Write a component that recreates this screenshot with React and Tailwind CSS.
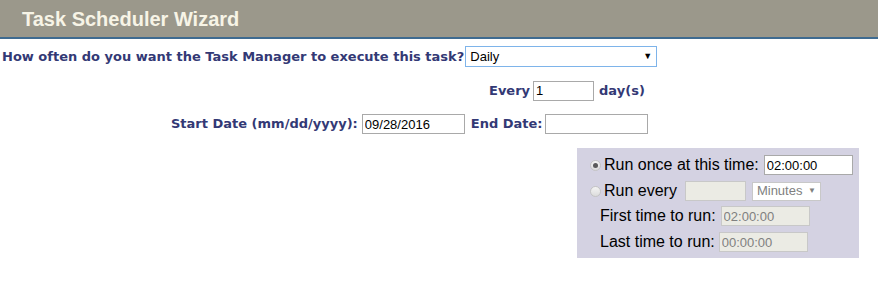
import { useState } from 'react'

const label = 'font-bold text-[#333975] text-[13px] font-["DejaVu_Sans",Verdana,sans-serif]'
const box = 'h-[20px] border border-[#a9a9a9] bg-white px-[2px] text-[13px] text-black font-["Liberation_Sans",Arial,sans-serif] outline-none'
const off = 'h-[20px] border border-[#c8c8c8] bg-[#ebebe4] px-[2px] text-[13px] text-[#808080] font-["Liberation_Sans",Arial,sans-serif] outline-none'

function Radio({ on }) {
  return (
    <span className="w-[11px] h-[11px] rounded-full border border-[#c4c4c4] bg-gradient-to-b from-[#f4f4f4] to-[#dcdcdc] flex items-center justify-center">
      {on && <span className="w-[5px] h-[5px] rounded-full bg-[#5a5a5a]" />}
    </span>
  )
}

export default function App() {
  const [freq, setFreq] = useState('Daily')

  return (
    <div className="w-[878px] h-[282px] bg-white overflow-hidden">
      <div className="h-[37px] bg-[#9b988b] flex items-center pl-[22px] border-b-2 border-[#3f6b90] box-content">
        <h1 className="text-[20px] font-bold text-[#f7f4e6] font-['Liberation_Sans',Arial,sans-serif]">Task Scheduler Wizard</h1>
      </div>

      {/* frequency */}
      <div className="flex items-center mt-[7px] pl-[2px] h-[21px]">
        <span className={label}>How often do you want the Task Manager to execute this task?</span>
        <div className="ml-[1px] w-[192px] h-[21px] border border-[#7eb4ea] bg-white flex items-center justify-between px-[4px] text-[13px] font-['Liberation_Sans',Arial,sans-serif]">
          <span>{freq}</span>
          <span className="text-[9px]">▼</span>
        </div>
      </div>

      <div className="flex items-center mt-[13px] pl-[489px] h-[21px]">
        <span className={label}>Every</span>
        <input className={`${box} ml-[3px] w-[61px]`} defaultValue="1" />
        <span className={`${label} ml-[5px]`}>day(s)</span>
      </div>

      <div className="flex items-center mt-[13px] pl-[171px] h-[20px]">
        <span className={label}>Start Date (mm/dd/yyyy):</span>
        <input className={`${box} ml-[4px] w-[103px]`} defaultValue="09/28/2016" />
        <span className={`${label} ml-[6px]`}>End Date:</span>
        <input className={`${box} ml-[2px] w-[103px]`} />
      </div>

      <div className="ml-[577px] mt-[14px] w-[282px] h-[110px] bg-[#d4d2e2] pt-[7px] pl-[13px] font-['Liberation_Sans',Arial,sans-serif] text-[16px] text-black">
        <div className="flex items-center h-[20px]">
          <Radio on />
          <span className="ml-[3px]">Run once at this time:</span>
          <input className={`${box} ml-[5px] w-[89px]`} defaultValue="02:00:00" onChange={() => setFreq('Daily')} />
        </div>
        <div className="flex items-center h-[20px] mt-[6px]">
          <Radio />
          <span className="ml-[3px]">Run every</span>
          <input className={`${off} ml-[8px] w-[61px]`} disabled />
          <div className="ml-[6px] w-[69px] h-[19px] border border-[#c8c8c8] bg-white flex items-center justify-between px-[4px] text-[13px] text-[#808080]">
            <span>Minutes</span>
            <span className="text-[8px]">▼</span>
          </div>
        </div>
        <div className="flex items-center h-[20px] mt-[5px] pl-[10px]">
          <span>First time to run:</span>
          <input className={`${off} ml-[5px] w-[89px]`} defaultValue="02:00:00" disabled />
        </div>
        <div className="flex items-center h-[20px] mt-[6px] pl-[10px]">
          <span>Last time to run:</span>
          <input className={`${off} ml-[4px] w-[89px]`} defaultValue="00:00:00" disabled />
        </div>
      </div>
    </div>
  )
}
